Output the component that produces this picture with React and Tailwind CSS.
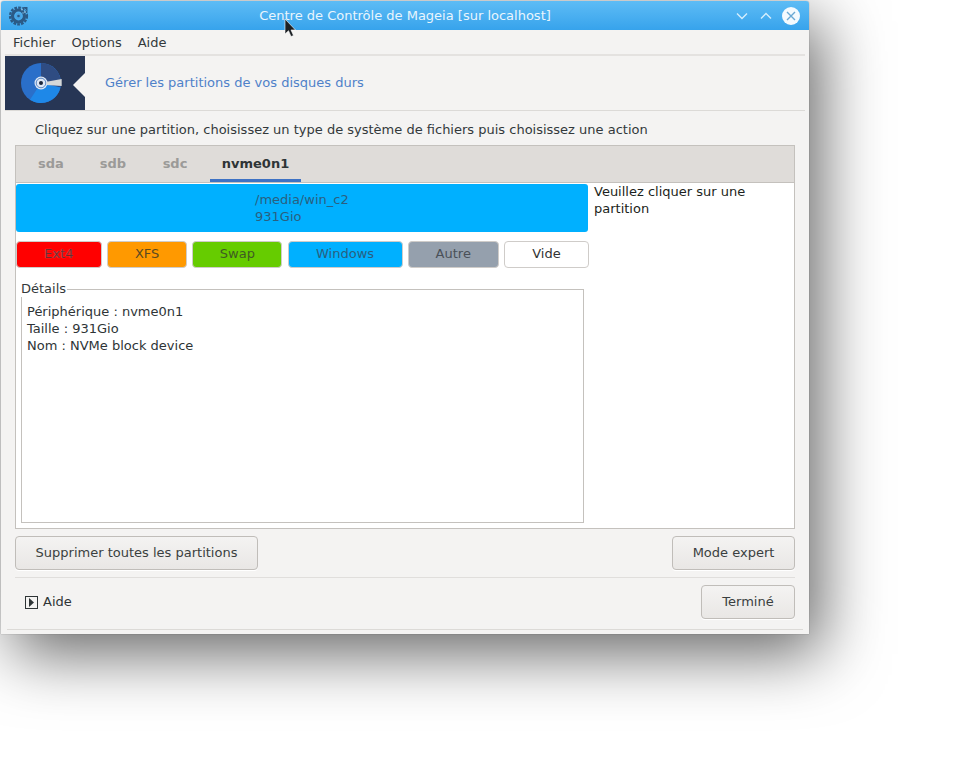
import React from 'react';

const tabs = ['sda', 'sdb', 'sdc'];

// Legend buttons under the partition bar
const legend = [
  { label: 'Ext4', width: 'w-[86px]', color: 'bg-[#ff0000] text-[#6e2c2c] [text-shadow:0_0_1px_rgba(255,255,255,0.5)]' },
  { label: 'XFS', width: 'w-[80px]', color: 'bg-[#ff9900] text-[#5c4a20]' },
  { label: 'Swap', width: 'w-[90px]', color: 'bg-[#66cc00] text-[#3f5c22]' },
  { label: 'Windows', width: 'w-[115px]', color: 'bg-[#00b0ff] text-[#2a5f80]' },
  { label: 'Autre', width: 'w-[91px]', color: 'bg-[#95a0ad] text-[#4a5058]' },
  { label: 'Vide', width: 'w-[85px]', color: 'bg-white text-[#333]' },
];

const GrayButton = ({ className, children }) => (
  <button className={`h-[34px] rounded-[4px] border border-[#c0bdb9] bg-gradient-to-b from-[#f4f3f2] to-[#e9e7e5] text-[13px] text-[#3a3f40] shadow-[0_1px_0_#fff] ${className}`}>
    {children}
  </button>
);

const AppIcon = () => (
  <svg width="22" height="22" viewBox="0 0 22 22">
    <circle cx="10.5" cy="11" r="8.400" fill="none" stroke="#2b5a86" strokeWidth="2.400" strokeDasharray="2.700 1.200" />
    <circle cx="10.5" cy="11" r="6" fill="none" stroke="#2b5a86" strokeWidth="3.200" />
    <circle cx="10.5" cy="11" r="3" fill="#4aa3e2" />
    <circle cx="10.5" cy="11" r="1.300" fill="#2b5a86" />
    <path d="M11 2h8.500v8.500a9 9 0 0 1-1 4a8 8 0 0 0-7.500-12.500z" fill="#2b5a86" />
    <circle cx="14" cy="4.500" r="0.900" fill="#8cc8ee" />
    <circle cx="17" cy="7" r="0.900" fill="#8cc8ee" />
    <circle cx="15" cy="8" r="0.700" fill="#8cc8ee" />
  </svg>
);

const DiskIcon = () => (
  <svg width="80" height="54" viewBox="0 0 80 54">
    <rect width="80" height="54" fill="#273655" />
    <circle cx="36" cy="27" r="20" fill="#2a6fc9" />
    <path d="M36 27V7A20 20 0 0 1 55.500 31.500z" fill="#2f4c82" />
    <path d="M36 27L55.500 31.500A20 20 0 0 1 25 43.700z" fill="#1e88e8" />
    <circle cx="36" cy="27" r="6.500" fill="#dfe8f5" />
    <circle cx="36" cy="27" r="4.800" fill="none" stroke="#3a6fb5" strokeWidth="0.800" />
    <circle cx="36" cy="27" r="2" fill="#1a2438" />
    <path d="M41.500 25.700L56.700 23V30L41.500 29z" fill="#d5d8d8" />
    <path d="M80 17L68 29L80 41z" fill="#f4f3f2" />
  </svg>
);

const Cursor = () => (
  <svg className="absolute left-[284px] top-[18px]" width="14" height="20" viewBox="0 0 14 20">
    <path d="M1 1V16L4.500 12.700L7 18.500L9.500 17.500L7 12H11.500z" fill="#1c2024" stroke="#fff" strokeWidth="0.6" />
  </svg>
);

const App = () => {
  return (
    <div className="relative h-[783px] w-[958px] overflow-hidden bg-white pl-px pt-px font-['DejaVu_Sans',sans-serif] text-[13px] text-[#2e3436]">
      <div className="flex h-[633px] w-[808px] flex-col rounded-t-[3px] bg-[#f4f3f2] shadow-[12px_20px_64px_rgba(0,0,0,0.6),0_0_1px_rgba(0,0,0,0.6)]">
        {/* Title bar */}
        <div className="flex h-[29px] items-center rounded-t-[3px] bg-gradient-to-b from-[#5dbcf5] to-[#36a3ec] pl-[7px] pr-[9px] text-white">
          <AppIcon />
          <div className="flex-1 pl-[46px] text-center text-[13px] text-[#e8f5fd]">Centre de Contrôle de Mageia [sur localhost]</div>
          <div className="flex items-center gap-[8px]">
            <svg width="16" height="16" viewBox="0 0 16 16" fill="none" stroke="#d5eefc" strokeWidth="1.400"><path d="M3 5.500l5 5 5-5" /></svg>
            <svg width="16" height="16" viewBox="0 0 16 16" fill="none" stroke="#d5eefc" strokeWidth="1.400"><path d="M3 10.500l5-5 5 5" /></svg>
            <svg width="18" height="18" viewBox="0 0 18 18" fill="none" stroke="#6aa9d4" strokeWidth="1.400"><circle cx="9" cy="9" r="9" fill="#f4fafe" stroke="none" /><path d="M5 5l8 8M13 5l-8 8" /></svg>
          </div>
        </div>

        {/* Menu bar */}
        <div className="mx-[4px] flex h-[26px] items-center gap-[16px] border-b-2 border-[#e4e2e0] pl-[8px] pt-[1px] text-[#33393b]">
          <span>Fichier</span>
          <span>Options</span>
          <span>Aide</span>
        </div>

        {/* Header banner */}
        <div className="mx-[4px] flex h-[55px] items-start border-b border-[#dcdad7]">
          <DiskIcon />
          <span className="ml-[20px] pt-[17px] text-[#4f81c9]">Gérer les partitions de vos disques durs</span>
        </div>

        <div className="flex flex-1 flex-col px-[14px]">
          <div className="flex h-[34px] items-center pl-[20px] pt-[3px] text-[#33393b]">
            Cliquez sur une partition, choisissez un type de système de fichiers puis choisissez une action
          </div>

          {/* Notebook */}
          <div className="flex h-[384px] flex-col border border-[#c4c1bd] bg-white">
            <div className="flex h-[37px] shrink-0 items-stretch gap-[4px] border-b border-[#c4c1bd] bg-[#dfdcd9] pl-[6px] text-[13px] font-bold">
              {tabs.map((tab) => (
                <div key={tab} className="flex w-[58px] items-center justify-center text-[#9b9a98]">{tab}</div>
              ))}
              <div className="ml-[2px] flex w-[91px] items-center justify-center border-b-[3px] border-[#3e72c4] pt-[3px] text-[#2e3436]">nvme0n1</div>
            </div>

            <div className="flex flex-1">
              <div className="flex w-[578px] shrink-0 flex-col pt-[1px]">
                {/* Partition bar */}
                <div className="h-[48px] w-[572px] rounded-[3px] bg-[#00b0ff] pl-[239px] pt-[7px] leading-[17px] text-[#2a5f80]">
                  <div>/media/win_c2</div>
                  <div>931Gio</div>
                </div>

                <div className="mt-[9px] flex w-[573px] justify-between">
                  {legend.map((item) => (
                    <button key={item.label} className={`h-[27px] rounded-[4px] border border-[#cfccc9] pb-[2px] text-[13px] ${item.width} ${item.color}`}>
                      {item.label}
                    </button>
                  ))}
                </div>

                {/* Details frame */}
                <div className="relative ml-[5px] mt-[21px] h-[234px] w-[563px] border border-[#c4c1bd] px-[5px] pt-[13px] leading-[17px]">
                  <span className="absolute -top-[10px] -left-px bg-white pr-px leading-[17px] text-[#33393b]">Détails</span>
                  <div>Périphérique : nvme0n1</div>
                  <div>Taille : 931Gio</div>
                  <div>Nom : NVMe block device</div>
                </div>
              </div>
              <div className="leading-[17px] text-[#1c1f20]">Veuillez cliquer sur une<br />partition</div>
            </div>
          </div>

          <div className="mt-[7px] flex justify-between">
            <GrayButton className="w-[243px]">Supprimer toutes les partitions</GrayButton>
            <GrayButton className="w-[123px]">Mode expert</GrayButton>
          </div>

          <div className="mt-[7px] flex h-[49px] items-center justify-between border-t border-[#e0dedc]">
            <div className="flex items-center gap-[5px] pl-[10px]">
              <span className="flex h-[13px] w-[13px] items-center justify-center border border-[#2e3436]">
                <svg width="7" height="9" viewBox="0 0 7 9"><path d="M1 0l5 4.500-5 4.500z" fill="#2e3436" /></svg>
              </span>
              <span>Aide</span>
            </div>
            <GrayButton className="w-[94px]">Terminé</GrayButton>
          </div>
        </div>

        <div className="mx-[6px] mb-[4px] border-b border-[#dcdad7]" />
      </div>
      <Cursor />
    </div>
  );
};

export default App;
